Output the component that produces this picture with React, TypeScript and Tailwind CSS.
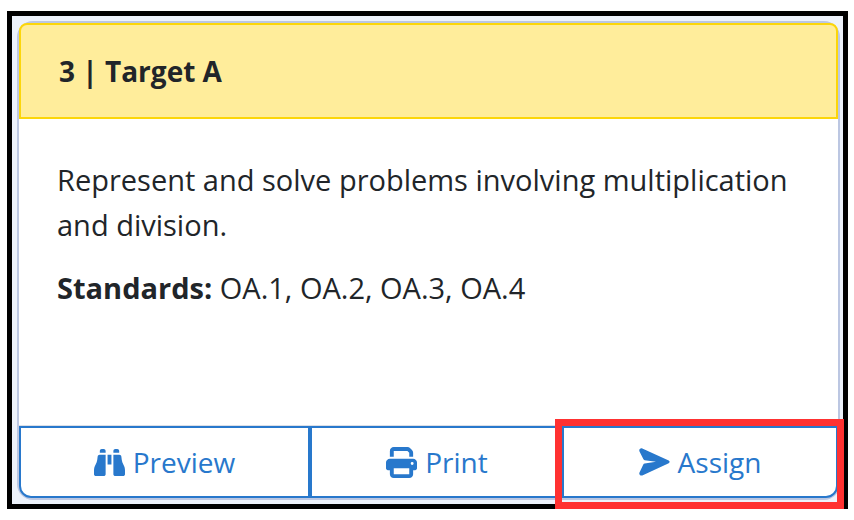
import { FaBinoculars, FaPrint } from "react-icons/fa6"

interface Target {
  title: string
  description: string
  standards: string[]
}

const target: Target = {
  title: "3 | Target A",
  description: "Represent and solve problems involving multiplication and division.",
  standards: ["OA.1", "OA.2", "OA.3", "OA.4"],
}

function SendIcon() {
  return (
    <svg viewBox="0 0 31 28" className="h-7 w-[31px]" fill="currentColor" aria-hidden="true">
      <path d="M3.3.4 29.7 12.4Q31.6 13.8 29.7 15.2L3.3 27.4C1.5 28.2-.4 26.3.5 24.4L4.3 16.6Q4.7 15.7 5.7 15.5L17 13.8 5.7 12.2Q4.7 12 4.3 11.1L.5 3.4C-.4 1.5 1.4-.4 3.3.4Z" />
    </svg>
  )
}

function TargetCard({ title, description, standards }: Target) {
  return (
    <article className="rounded-2xl border-2 border-[#bcc7e2] bg-white">
      <header className="flex h-24 items-center rounded-t-lg border-2 border-[#fcd60a] bg-[#ffed9b] px-[38px]">
        <h1 className="text-[28px] leading-[45px] font-bold">{title}</h1>
      </header>

      <div className="min-h-[306px] px-[38px] pt-[38px] text-[29px] leading-[45px]">
        <p className="mb-[18px]">{description}</p>
        <p>
          <strong>Standards:</strong> {standards.join(", ")}
        </p>
      </div>

      {/* Actions */}
      <footer className="grid h-[73px] grid-cols-[291fr_252fr_276fr] border-t border-[#dcdfe6] text-[28px] leading-[45px] text-[#2878cc]">
        <button
          type="button"
          className="flex items-center justify-center gap-2 rounded-bl-xl border-2 border-[#2878cc]"
        >
          <FaBinoculars className="size-[31px]" aria-hidden="true" />
          Preview
        </button>
        <button
          type="button"
          className="flex items-center justify-center gap-2 border-y-2 border-l-2 border-[#2878cc]"
        >
          <FaPrint className="size-[31px]" aria-hidden="true" />
          Print
        </button>
        <div className="relative flex">
          <button
            type="button"
            className="flex flex-1 items-center justify-center gap-2 rounded-br-xl border-2 border-[#2878cc]"
          >
            <SendIcon />
            Assign
          </button>
          {/* Callout around the highlighted action */}
          <span className="pointer-events-none absolute -top-[7px] -right-[6px] -bottom-[11px] -left-[7px] border-7 border-[#ff3131]" />
        </div>
      </footer>
    </article>
  )
}

export default function App() {
  return (
    <main className="min-h-screen bg-white pt-[11px] pr-[6px] pb-[11px] pl-[7px] font-['Open_Sans','Noto_Sans',sans-serif] text-[#212529]">
      <section className="border-5 border-black bg-[#edf2fb] pt-[5px] pr-[3px] pb-1 pl-[5px]">
        <TargetCard {...target} />
      </section>
    </main>
  )
}
